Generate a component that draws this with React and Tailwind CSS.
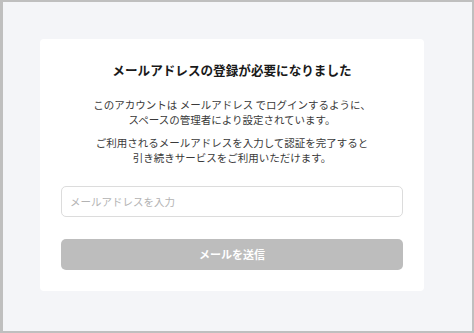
export default function App() {
  return (
    <div
      className="h-screen w-screen box-border border-t-2 border-l-[3px] border-r-2 border-b-2 border-[#bfbfbf] bg-[#f4f5f8] overflow-hidden"
      style={{ fontFamily: '"Noto Sans CJK JP", "Noto Sans", sans-serif' }}
    >
      <div className="ml-[37px] mt-[37px] w-[384px] bg-white rounded-[4px] px-[21px] pt-[22px] pb-[21px]">
        <h1 className="text-center text-[12.6px] leading-[18px] font-bold text-[#1a1a1a]">
          メールアドレスの登録が必要になりました
        </h1>
        <p className="mt-[18px] text-center text-[10.5px] leading-[15px] text-[#3a3a3a]">
          このアカウントは メールアドレス でログインするように、
          <br />
          スペースの管理者により設定されています。
        </p>
        <p className="mt-[8px] text-center text-[10.5px] leading-[15px] text-[#3a3a3a]">
          ご利用されるメールアドレスを入力して認証を完了すると
          <br />
          引き続きサービスをご利用いただけます。
        </p>
        <input
          type="text"
          placeholder="メールアドレスを入力"
          className="mt-[21px] block w-full h-[31px] rounded-[5px] border border-[#dcdcdc] px-[8px] text-[10.5px] text-[#333] placeholder:text-[#b3b3b3] outline-none"
        />
        <button
          disabled
          className="mt-[22px] block w-full h-[31px] rounded-[5px] bg-[#bdbdbd] text-white text-[11px] font-bold"
        >
          メールを送信
        </button>
      </div>
    </div>
  );
}
